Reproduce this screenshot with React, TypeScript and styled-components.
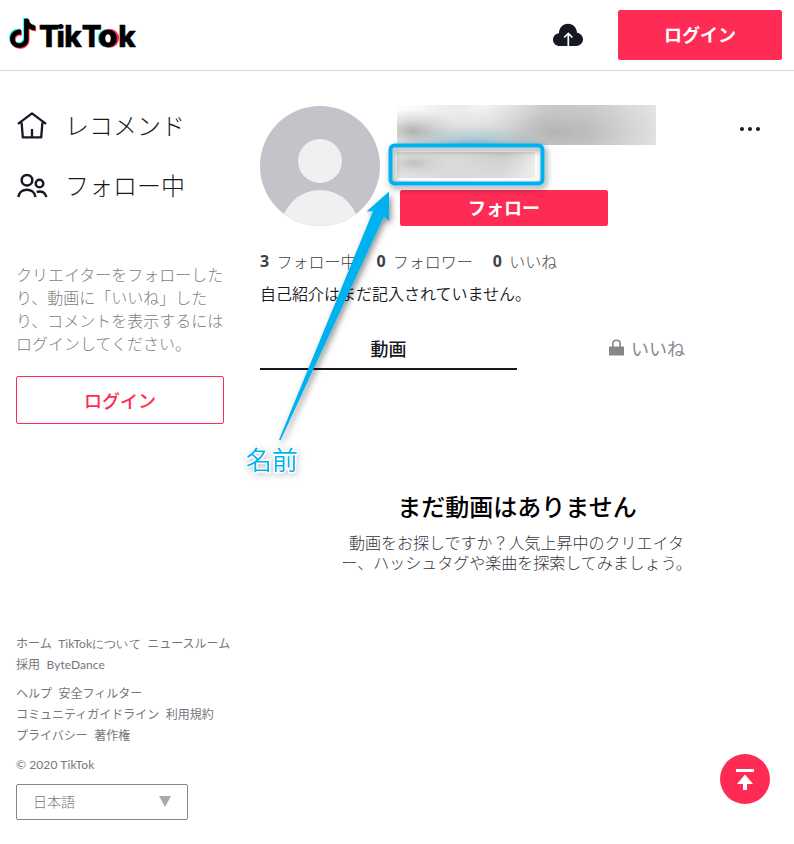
import React from "react";
import styled, { createGlobalStyle } from "styled-components";

const Global = createGlobalStyle`
  * { box-sizing: border-box; }
  body {
    margin: 0;
    background: #fff;
    color: #161823;
    font-family: "Noto Sans CJK JP", sans-serif;
  }
  button { font-family: inherit; cursor: pointer; }
  p, h2 { margin: 0; }
`;

const Page = styled.div`
  position: relative;
  width: 794px;
  height: 844px;
  overflow: hidden;
`;

const Header = styled.header`
  height: 71px;
  padding: 0 12px 0 8px;
  border-bottom: 1px solid #d2dbdc;
  display: flex;
  align-items: center;
`;

const Logo = styled.svg`
  display: block;
  margin-right: auto;
`;

const Upload = styled.svg`
  margin-right: 35px;
`;

const Button = styled.button<{ $outline?: boolean; $w: number; $h: number }>`
  width: ${(p) => p.$w}px;
  height: ${(p) => p.$h}px;
  padding: 0 0 ${(p) => (p.$outline ? 0 : 2)}px;
  border-radius: 2px;
  border: 1px solid #fe2c55;
  background: ${(p) => (p.$outline ? "#fff" : "#fe2c55")};
  color: ${(p) => (p.$outline ? "#fe2c55" : "#fff")};
  font-size: 18px;
  font-weight: ${(p) => (p.$outline ? 500 : 700)};
  line-height: 24px;
  display: flex;
  align-items: center;
  justify-content: center;
`;

const Body = styled.div`
  display: grid;
  grid-template-columns: 244px 514px;
  column-gap: 16px;
  height: 773px;
`;

const Sidebar = styled.aside`
  padding: 25px 0 24px 16px;
  display: flex;
  flex-direction: column;
  align-items: flex-start;
`;

const NavItem = styled.a`
  height: 60px;
  display: flex;
  align-items: center;
  gap: 17px;
  font-size: 24px;
  font-weight: 300;
`;

const NavLabel = styled.span`
  padding-bottom: 4px;
`;

const Hint = styled.p`
  width: 212px;
  margin: 47px 0 21px;
  font-size: 16px;
  font-weight: 300;
  line-height: 23px;
  color: #7d7e84;
  white-space: nowrap;
`;

const Footer = styled.footer`
  margin-top: auto;
  font-size: 12px;
  line-height: 21px;
  color: #75767b;
  font-family: Lato, "Noto Sans CJK JP", sans-serif;
`;

const LinkGroup = styled.div`
  margin-bottom: 8px;
`;

const LinkRow = styled.div`
  display: flex;
  gap: 6.5px;
  height: 21px;
  white-space: nowrap;
`;

const Latin = styled.span<{ $spacing?: number }>`
  font-family: Lato, sans-serif;
  letter-spacing: ${(p) => p.$spacing ?? 0}px;
`;

const Language = styled.div`
  margin-top: 9px;
  width: 172px;
  height: 36px;
  border: 1px solid #86878d;
  border-radius: 2px;
  padding: 0 16px 2px;
  display: flex;
  align-items: center;
  justify-content: space-between;
  font-size: 14px;
  font-weight: 300;
`;

const Main = styled.main`
  padding-top: 34px;
`;

const Profile = styled.section`
  display: flex;
  height: 121px;
`;

const Avatar = styled.svg`
  margin-top: 1px;
`;

const Identity = styled.div`
  width: 259px;
  margin-left: 17px;
`;

const NameBlur = styled.div`
  height: 40px;
  background:
    radial-gradient(ellipse 80px 24px at 76px 44px, rgba(73, 170, 204, 0.75), rgba(110, 178, 202, 0.3) 55%, transparent),
    radial-gradient(ellipse 48px 22px at 16px 26px, rgba(160, 157, 154, 0.75), rgba(175, 173, 171, 0.35) 50%, transparent),
    radial-gradient(ellipse 110px 36px at 160px 27px, rgba(165, 165, 165, 0.6), rgba(180, 180, 180, 0.25) 55%, transparent),
    radial-gradient(ellipse 60px 44px at 86px 2px, #f4f4f4, rgba(244, 244, 244, 0.5) 50%, transparent),
    radial-gradient(ellipse 70px 30px at 0 0, #ffffff, transparent),
    linear-gradient(90deg, #f2f2f2 0, #d9d9d9 25%, #dadada 40%, #cccccc 60%, #cdcdcd 75%, #e2e4e3 100%);
`;

const IdBlur = styled.div`
  width: 138px;
  height: 26px;
  margin-top: 7px;
  background:
    radial-gradient(ellipse 34px 14px at 17px 11px, rgba(182, 182, 182, 0.75), rgba(190, 190, 190, 0.3) 50%, transparent),
    radial-gradient(ellipse 40px 22px at 104px 2px, rgba(200, 200, 200, 0.7), transparent),
    linear-gradient(90deg, #e5e5e5, #d9d9d9 35%, #dadada 75%, #eeeeee);
`;

const FollowSlot = styled.div`
  margin: 12px 0 0 3px;
`;

const More = styled.svg`
  margin: 21px 14px 0 auto;
`;

const Stats = styled.div`
  margin-top: 23px;
  height: 24px;
  display: flex;
  gap: 20px;
  font-size: 16px;
  line-height: 24px;
  color: #3f4045;
  font-weight: 300;
`;

const Stat = styled.div`
  display: flex;
  gap: 6.4px;
  white-space: nowrap;
  strong {
    width: 10px;
    font-family: "Open Sans", sans-serif;
    font-weight: 700;
  }
`;

const Bio = styled.p`
  margin-top: 8px;
  font-size: 16px;
  line-height: 24px;
  font-weight: 350;
`;

const Tabs = styled.nav`
  margin-top: 25px;
  display: grid;
  grid-template-columns: 1fr 1fr;
  height: 40px;
`;

const Tab = styled.div<{ $active?: boolean }>`
  display: flex;
  justify-content: center;
  align-items: center;
  gap: 7px;
  padding: 0 0 ${(p) => (p.$active ? 2 : 4)}px ${(p) => (p.$active ? 0 : 3)}px;
  font-size: 18px;
  line-height: 24px;
  font-weight: ${(p) => (p.$active ? 500 : 400)};
  color: ${(p) => (p.$active ? "#161823" : "#8a8b91")};
  border-bottom: ${(p) => (p.$active ? "2px solid #161823" : "0")};
`;

const Empty = styled.section`
  margin-top: 119px;
  text-align: center;
  h2 {
    font-size: 24px;
    line-height: 34px;
    font-weight: 500;
    color: #000;
  }
  p {
    margin: 9px 1px 0 0;
    font-size: 16px;
    line-height: 20px;
    font-weight: 300;
    color: #35363b;
  }
`;

const ToTop = styled.button`
  position: absolute;
  right: 24px;
  bottom: 40px;
  width: 50px;
  height: 50px;
  padding: 0;
  border: 0;
  border-radius: 50%;
  background: #fe2c55;
`;

const Annotation = styled.svg`
  position: absolute;
  left: 230px;
  top: 130px;
  pointer-events: none;
`;

function TikTokLogo() {
  const note =
    "M15.5 0H20c.3 3.9 2.8 6.4 6.6 6.8v4.6c-2.5.1-4.7-.7-6.6-2v10.500c0 12-18.600 12-18.600.3 0-6 5-10.200 11-9.300v4.900c-3.600-.9-6.400 1.200-6.300 4.400.1 5.900 9.400 5.800 9.400-.4z";
  return (
    <Logo width="134" height="40" viewBox="8 15 134 40">
      <path d={note} transform="translate(7.700 17.800)" fill="#25f4ee" />
      <path d={note} transform="translate(9.500 19.800)" fill="#fe2c55" />
      <path d={note} transform="translate(8.600 18.800)" fill="#000" />
      <g fill="none" strokeWidth="5">
        <circle cx="107.200" cy="38.200" r="7" stroke="#25f4ee" />
        <circle cx="109.600" cy="38.200" r="7" stroke="#fe2c55" />
      </g>
      <g fontFamily="Inter, sans-serif" fontWeight="800" fontSize="29.500" stroke="#000" strokeWidth=".5">
        <text y="46.800" x="39">T</text>
        <text y="46.800" x="56.600">i</text>
        <text y="46.800" x="64.300">k</text>
        <text y="46.800" x="81.800">T</text>
        <text y="47.300" x="98.300" fontSize="31">o</text>
        <text y="46.800" x="118.300">k</text>
      </g>
    </Logo>
  );
}

const Home = () => (
  <svg width="32" height="32" viewBox="0 0 32 32" fill="none" stroke="#161823" strokeWidth="2.300" strokeLinejoin="round">
    <path d="M2 13.800 16 3.400l14 10.400M5.600 12.500 6.800 27.400h18.400l1.200-14.900M16 19v8" />
  </svg>
);

const People = () => (
  <svg width="32" height="32" viewBox="0 0 32 32" fill="none" stroke="#161823" strokeWidth="2.500">
    <circle cx="11" cy="10.200" r="5.300" />
    <circle cx="23.500" cy="13.500" r="3.800" />
    <path d="M2.300 27c1.300-9.600 15.900-9.600 17.200 0M20.700 22c4.600-1.700 8.700.3 9.700 5" />
  </svg>
);

export default function App() {
  return (
    <Page>
      <Global />
      <Header>
        <TikTokLogo />
        <Upload width="30" height="24" viewBox="0 0 30 24">
          <path d="M7 23C2.800 23 0 20.300 0 16.700c0-3.500 2.500-6.200 6-6.500C6 4.800 9.800.8 15 .8s8.700 4 9 8.900c3.500.3 6 3.400 6 6.600 0 3.900-3 6.700-6.900 6.700z" fill="#161823" />
          <path d="M15.300 23V10.800M11.200 14.500l4.100-4 4.100 4" fill="none" stroke="#fff" strokeWidth="1.700" />
        </Upload>
        <Button $w={164} $h={50}>ログイン</Button>
      </Header>
      <Body>
        <Sidebar>
          <NavItem><Home /><NavLabel>レコメンド</NavLabel></NavItem>
          <NavItem><People /><NavLabel>フォロー中</NavLabel></NavItem>
          <Hint>
            クリエイターをフォローした<br />り、動画に「いいね」した<br />り、コメントを表示するには<br />ログインしてください。
          </Hint>
          <Button $outline $w={208} $h={48}>ログイン</Button>
          <Footer>
            <LinkGroup>
              <LinkRow><span>ホーム</span><Latin $spacing={0.1}>TikTokについて</Latin><span>ニュースルーム</span></LinkRow>
              <LinkRow><span>採用</span><Latin $spacing={0.05}>ByteDance</Latin></LinkRow>
            </LinkGroup>
            <LinkGroup>
              <LinkRow><span>ヘルプ</span><span>安全フィルター</span></LinkRow>
              <LinkRow><span>コミュニティガイドライン</span><span>利用規約</span></LinkRow>
              <LinkRow><span>プライバシー</span><span>著作権</span></LinkRow>
            </LinkGroup>
            <LinkRow><Latin $spacing={0.1}>© 2020 TikTok</Latin></LinkRow>
            <Language>
              日本語
              <svg width="12" height="11" viewBox="0 0 12 11"><path d="M0 0h12L6 11z" fill="#a9aaae" /></svg>
            </Language>
          </Footer>
        </Sidebar>
        <Main>
          <Profile>
            <Avatar width="120" height="120" viewBox="0 0 120 120">
              <defs><clipPath id="disc"><circle cx="60" cy="60" r="60" /></clipPath></defs>
              <g clipPath="url(#disc)">
                <rect width="120" height="120" fill="#c3c4c9" />
                <circle cx="60" cy="55" r="22" fill="#f0f0f0" />
                <circle cx="60" cy="123" r="39" fill="#f0f0f0" />
              </g>
            </Avatar>
            <Identity>
              <NameBlur />
              <IdBlur />
              <FollowSlot><Button $w={208} $h={36}>フォロー</Button></FollowSlot>
            </Identity>
            <More width="20" height="6" viewBox="0 0 20 6" fill="#161823">
              <circle cx="2" cy="3" r="2" /><circle cx="10" cy="3" r="2" /><circle cx="18" cy="3" r="2" />
            </More>
          </Profile>
          <Stats>
            <Stat><strong>3</strong>フォロー中</Stat>
            <Stat><strong>0</strong>フォロワー</Stat>
            <Stat><strong>0</strong>いいね</Stat>
          </Stats>
          <Bio>自己紹介はまだ記入されていません。</Bio>
          <Tabs>
            <Tab $active>動画</Tab>
            <Tab>
              <svg width="15" height="18" viewBox="0 0 15 18">
                <path d="M0 7.500h15V16.500H0z" fill="#86878b" />
                <path d="M3.800 8V4.800c0-4.700 7.400-4.700 7.400 0V8" fill="none" stroke="#86878b" strokeWidth="1.600" />
              </svg>
              いいね
            </Tab>
          </Tabs>
          <Empty>
            <h2>まだ動画はありません</h2>
            <p>動画をお探しですか？人気上昇中のクリエイタ<br />ー、ハッシュタグや楽曲を探索してみましょう。</p>
          </Empty>
        </Main>
      </Body>
      <ToTop aria-label="トップへ戻る">
        <svg width="50" height="50" viewBox="0 0 50 50" fill="#fff">
          <path d="M16 15h18v3H16zM25 20.500l8 9.500h-6v6h-4v-6h-6z" />
        </svg>
      </ToTop>
      <Annotation width="340" height="360" viewBox="230 130 340 360">
        <defs>
          <filter id="shade" x="-20%" y="-20%" width="140%" height="140%">
            <feDropShadow dx="2" dy="3" stdDeviation="3" floodColor="#000" floodOpacity=".45" />
          </filter>
          <filter id="softShade" x="-20%" y="-20%" width="140%" height="150%">
            <feDropShadow dx="1" dy="2" stdDeviation="3" floodColor="#000" floodOpacity=".22" />
          </filter>
        </defs>
        <g filter="url(#shade)">
          <rect x="390.500" y="145.500" width="152" height="38" rx="4" fill="none" stroke="#03b1f0" strokeWidth="4" />
          <path d="M389 191.500V221l-5-4.500L280.500 440.500l-1.500-.8L373 211.300l-6.500.2z" fill="#03b1f0" />
        </g>
        <text x="246" y="470" fontSize="26" fontWeight="350" fill="#03b1f0" stroke="#fff" strokeWidth="2.500" paintOrder="stroke" filter="url(#softShade)">名前</text>
      </Annotation>
    </Page>
  );
}
